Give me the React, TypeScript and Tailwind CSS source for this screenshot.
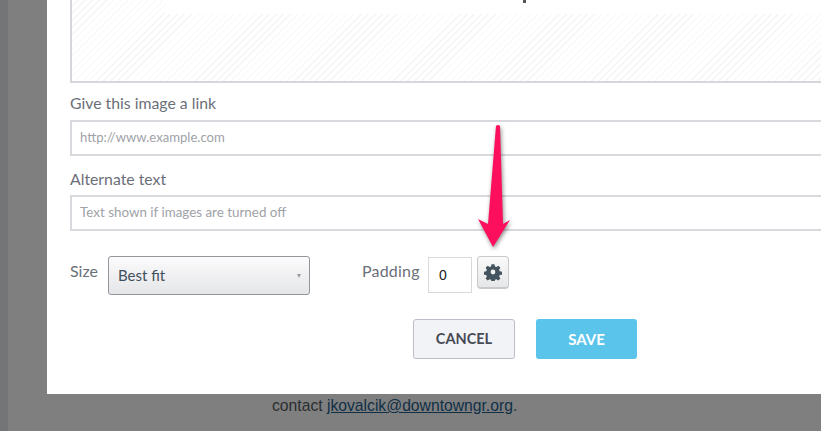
export default function App() {
  return (
    <div className="relative flex h-[431px] w-[821px] overflow-hidden bg-[#7f7f7f] font-['Lato','Liberation_Sans',sans-serif]">
      <div className="h-full w-2 shrink-0 bg-[#747576]" />
      <div className="flex min-w-0 flex-1 flex-col pl-[39px]">
        <div className="flex h-[394px] shrink-0 flex-col bg-white pl-[23px]">
          <div className="relative h-[83px] shrink-0 border-b-2 border-l-2 border-[#d6d7dc] bg-[repeating-linear-gradient(135deg,#ffffff_0px,#ffffff_4px,#f5f5f6_4px,#f5f5f6_5px)]">
            <div className="absolute left-[93px] right-0 top-0 h-[14px] bg-white" />
          </div>
          <label className="mt-[10px] h-[20px] text-[15.8px] leading-[20px] text-[#6b6f78]">Give this image a link</label>
          <div className="mt-[7px] flex h-[36px] shrink-0 items-center border-2 border-r-0 border-[#d8d9dd] pl-2 text-[13.1px] text-[#a0a2a8]">http://www.example.com</div>
          <label className="mt-[13px] h-[20px] text-[15.8px] leading-[20px] text-[#6b6f78]">Alternate text</label>
          <div className="mt-[6px] flex h-[36px] shrink-0 items-center border-2 border-r-0 border-[#d8d9dd] pb-px pl-2 text-[13.4px] text-[#a0a2a8]">Text shown if images are turned off</div>
          <div className="mt-[25px] flex h-[39px] shrink-0 items-start">
            <span className="mt-[5px] w-[38px] text-[16px] leading-[20px] text-[#6b6f78]">Size</span>
            <div className="flex h-[39px] w-[202px] items-center justify-between rounded-[3px] border border-[#93959b] bg-gradient-to-b from-[#fbfbfc] to-[#e5e6e8] pl-[9px] pr-2">
              <span className="text-[15px] text-[#3f4f5c]">Best fit</span>
              <span className="h-0 w-0 border-x-[2.5px] border-t-[4px] border-x-transparent border-t-[#9a9ca0]" />
            </div>
            <span className="ml-[52px] mt-[5px] w-[66px] text-[16px] leading-[20px] tracking-[0.2px] text-[#6b6f78]">Padding</span>
            <div className="mt-px flex h-[36px] w-[44px] items-center border border-[#d8d9dd] pl-[10px] font-['Liberation_Sans',sans-serif] text-[14px] text-[#222]">0</div>
            <button className="ml-[5px] flex h-[33px] w-[32px] items-center justify-center rounded-[4px] border border-b-2 border-[#c8c9cc] bg-gradient-to-b from-[#fafafa] to-[#e6e7e8]">
              <svg viewBox="0 0 24 24" className="h-[18px] w-[18px]" fill="#43545f">
                <path fillRule="evenodd" d="M10 1.5h4l.6 3 1.9.8 2.6-1.7 2.8 2.8-1.7 2.6.8 1.9 3 .6v4l-3 .6-.8 1.9 1.7 2.6-2.8 2.8-2.6-1.7-1.9.8-.6 3h-4l-.6-3-1.9-.8-2.6 1.7-2.8-2.8 1.7-2.6-.8-1.9-3-.6v-4l3-.6.8-1.9-1.7-2.6 2.8-2.8 2.6 1.7 1.9-.8zM12 8.8a3.2 3.2 0 1 0 0 6.4 3.2 3.2 0 0 0 0-6.4z" />
              </svg>
            </button>
          </div>
          <div className="mt-[24px] flex h-[40px] shrink-0 pl-[343px]">
            <button className="h-[40px] w-[102px] rounded-[3px] border border-[#bcbdc6] bg-[#f2f3f6] text-[14.5px] font-bold text-[#474a55]">CANCEL</button>
            <button className="ml-[21px] h-[40px] w-[101px] rounded-[3px] bg-[#5bc4eb] text-[15px] font-bold text-white">SAVE</button>
          </div>
        </div>
        <p className="pl-[225px] pt-[2px] font-['Liberation_Sans',sans-serif] text-[15.7px] leading-[19px] text-[#2a2e31]">
          contact <a className="text-[#0f2f47] underline">jkovalcik@downtowngr.org</a>.
        </p>
      </div>
      <div className="absolute left-[523px] top-0 h-[3px] w-[3px] bg-[#55585a]" />
      <svg className="absolute left-[470px] top-[118px] h-[140px] w-[50px] drop-shadow-[1px_2px_2px_rgba(0,0,0,0.45)]" viewBox="0 0 50 140">
        <path fill="#fd0f5d" d="M26 8 Q28 6 30 8 L33 106 L40 102 L23 129 L8 101 L18 106 Z" />
      </svg>
    </div>
  );
}
